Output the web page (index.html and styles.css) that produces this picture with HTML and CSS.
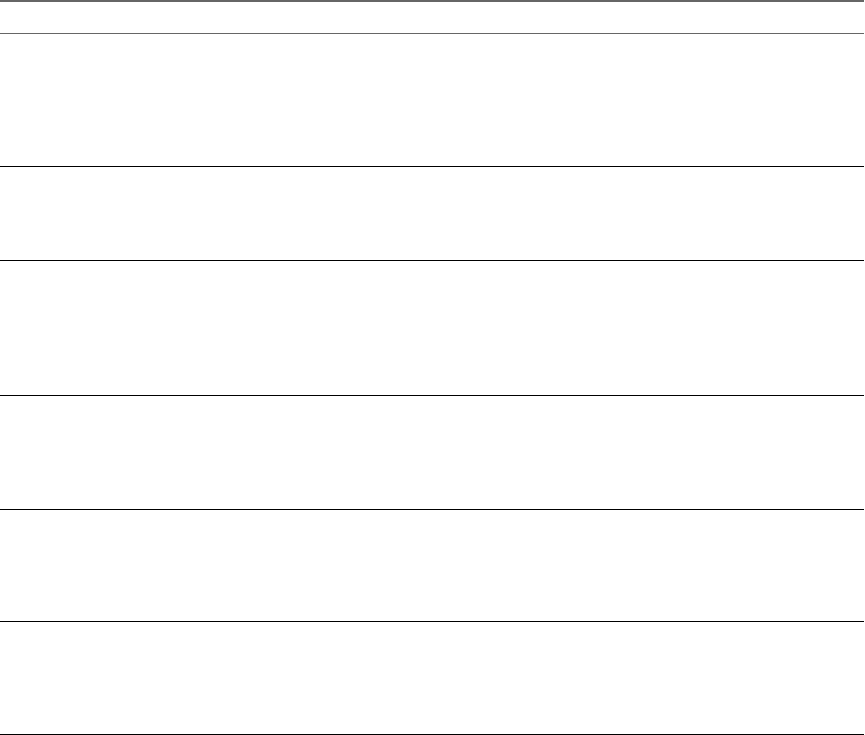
FILE: index.html
```html
<!DOCTYPE html>
<html lang="en">
<head>
<meta charset="utf-8">
<title>Table</title>
<link rel="stylesheet" href="styles.css">
</head>
<body>
<table class="grid">
  <colgroup>
    <col class="c1"><col class="c2"><col class="c3">
  </colgroup>
  <thead>
    <tr class="head"><th></th><th></th><th></th></tr>
  </thead>
  <tbody>
    <tr class="r1"><td></td><td></td><td></td></tr>
    <tr class="r2"><td></td><td></td><td></td></tr>
    <tr class="r3"><td></td><td></td><td></td></tr>
    <tr class="r4"><td></td><td></td><td></td></tr>
    <tr class="r5"><td></td><td></td><td></td></tr>
    <tr class="r6"><td></td><td></td><td></td></tr>
  </tbody>
</table>
</body>
</html>
```
FILE: styles.css
```css
html, body {
  margin: 0;
  padding: 0;
  background: #fff;
  font-family: "Liberation Sans", Arial, sans-serif;
}
.grid {
  width: 864px;
  border-collapse: separate;
  border-spacing: 0;
  table-layout: fixed;
}
.c1 { width: 255px; }
.c2 { width: 137px; }
.c3 { width: auto; }
.grid th, .grid td {
  padding: 0;
  box-sizing: border-box;
}
.grid th {
  border-top: 2px solid #666;
  border-bottom: 1px solid #666;
}
.grid td {
  border-bottom: 1px solid #000;
}
.head th { height: 34px; }
.r1 td { height: 133px; }
.r2 td { height: 94px; }
.r3 td { height: 135px; }
.r4 td { height: 114px; }
.r5 td { height: 112px; }
.r6 td { height: 113px; }
```
